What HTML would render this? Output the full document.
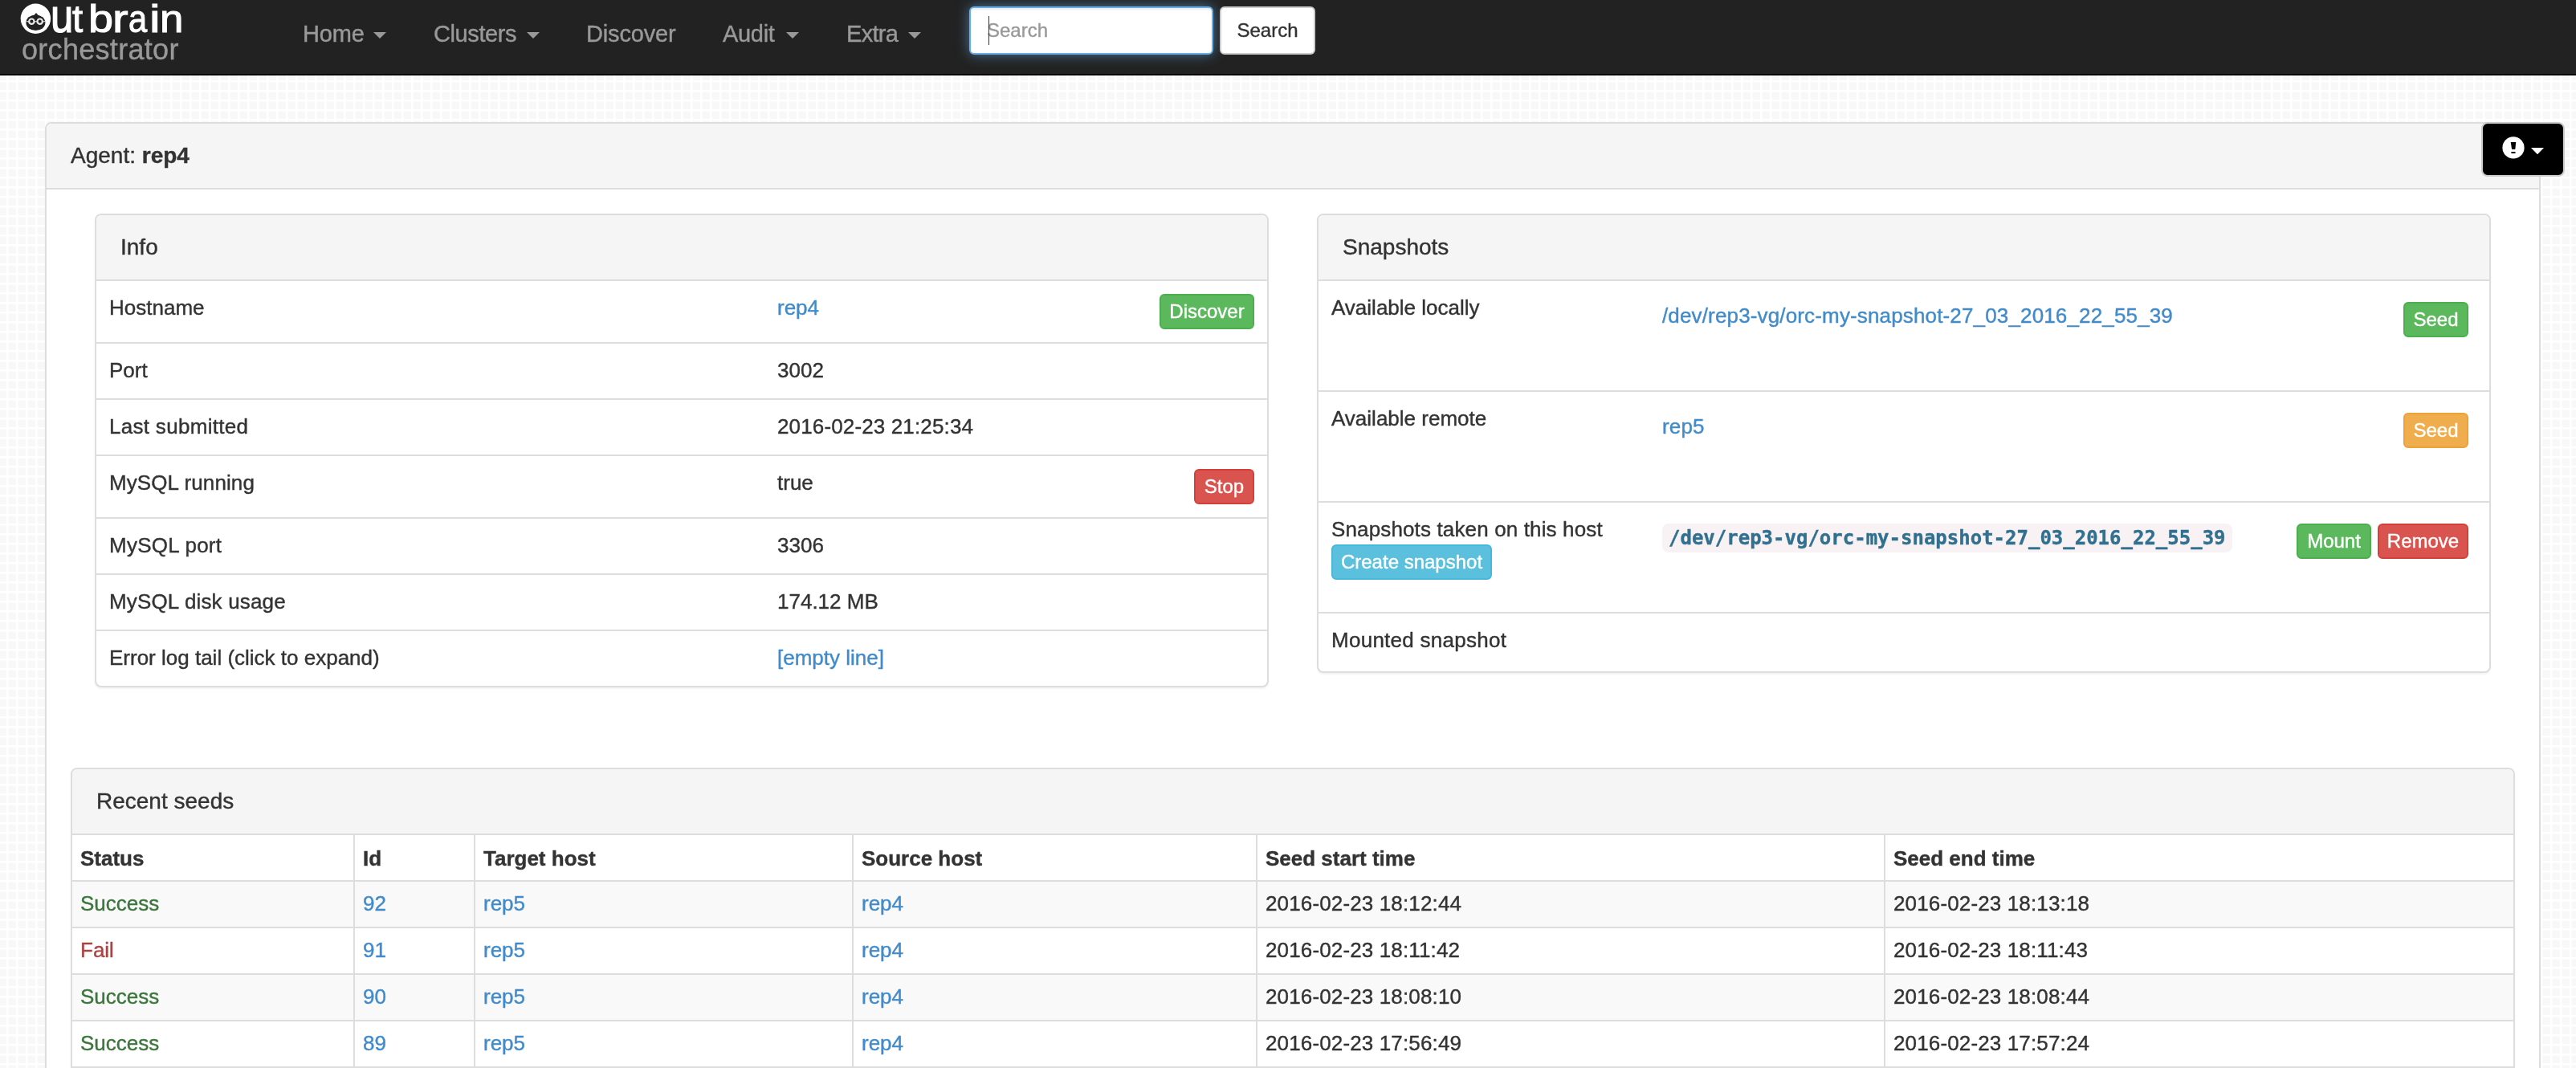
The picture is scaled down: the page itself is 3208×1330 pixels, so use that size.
<!DOCTYPE html>
<html lang="en">
<head>
<meta charset="utf-8">
<title>Orchestrator - Agent rep4</title>
<style>
*{box-sizing:border-box;}
html,body{margin:0;padding:0;}
body{
  width:3208px;height:1330px;overflow:hidden;position:relative;
  font-family:"Liberation Sans",Arial,Helvetica,sans-serif;
  font-size:26px;line-height:36px;color:#333;-webkit-text-stroke:0.4px;
  background-color:#f8f8f8;
  background-image:
    linear-gradient(to right,#fff 0,#fff 2px,rgba(255,255,255,.4) 2px,rgba(255,255,255,.4) 3px,transparent 3px),
    linear-gradient(to bottom,#fff 0,#fff 2px,rgba(255,255,255,.4) 2px,rgba(255,255,255,.4) 3px,transparent 3px);
  background-size:12px 12px,12px 12px;
  background-position:8px 4px,8px 4px;
}
a{color:#428bca;text-decoration:none;}
table{border-collapse:collapse;border-spacing:0;}

/* NAVBAR */
#nav{position:absolute;left:0;top:0;width:3208px;height:94px;background:#222;border-bottom:2px solid #080808;}
#brand{position:absolute;left:0;top:0;width:330px;height:92px;}
#brand .ob{position:absolute;left:0;top:0;}
#brand .obt{position:absolute;left:0;top:-1.5px;font-size:49px;line-height:49px;color:#fff;-webkit-text-stroke:1px #fff;}
#brand .obt span{position:absolute;top:0;display:block;transform-origin:0 41.5px;}
#brand .orc{position:absolute;left:27px;top:44px;font-size:36px;line-height:36px;color:#999;letter-spacing:0.3px;white-space:nowrap;}
.nv{position:absolute;top:22px;font-size:29px;line-height:40px;color:#999;white-space:nowrap;}
.caret{display:inline-block;width:0;height:0;margin-left:11px;vertical-align:middle;border-top:8px solid #999;border-left:8px solid transparent;border-right:8px solid transparent;position:relative;top:0px;}
#q{position:absolute;left:1207px;top:8px;width:304px;height:60px;background:#fff;border:2px solid #66afe9;border-radius:6px;
   box-shadow:inset 0 2px 2px rgba(0,0,0,.075),0 0 16px rgba(102,175,233,.6);font-size:24px;line-height:36px;color:#999;padding:10px 20px 6px 20px;}
#q i{position:absolute;left:22px;top:10px;width:1px;height:36px;background:#333;}
#qb{position:absolute;left:1519px;top:8px;width:119px;height:60px;background:#fff;border:2px solid #ccc;border-radius:6px;font-size:24px;line-height:36px;color:#333;text-align:center;padding-top:10px;}

#abtn{position:absolute;left:3090px;top:152px;width:104px;height:68px;background:#000;border:2px solid #ccc;border-radius:8px;}
#abtn svg{display:block;}
#nav,.panel,#abtn{will-change:transform;}
/* PANELS */
.panel{position:absolute;background:#fff;border:2px solid #ddd;border-radius:8px;box-shadow:0 2px 2px rgba(0,0,0,.05);}
.ph{height:82px;background:#f5f5f5;border-bottom:2px solid #ddd;border-radius:6px 6px 0 0;padding:20px 30px;font-size:28px;line-height:40px;color:#333;white-space:nowrap;}
#outer{left:56px;top:152px;width:3108px;height:1400px;}
#info{left:118px;top:266px;width:1462px;height:590px;}
#snap{left:1640px;top:266px;width:1462px;height:572px;}
#seeds{left:88px;top:956px;width:3044px;height:500px;}

.t{width:100%;table-layout:fixed;}
.t td,.t th{padding:15px 16px 17px;vertical-align:top;border-top:2px solid #ddd;text-align:left;white-space:nowrap;}
.t tr:first-child td{border-top:0;}
.btn{display:inline-block;height:44px;padding:2px 0;text-align:center;font-size:24px;line-height:36px;color:#fff;border:2px solid transparent;border-radius:6px;white-space:nowrap;vertical-align:top;position:relative;top:1px;}
.bs{background:#5cb85c;border-color:#4cae4c;}
.bd{background:#d9534f;border-color:#d43f3a;}
.bw{background:#f0ad4e;border-color:#eea236;}
.bi{background:#5bc0de;border-color:#46b8da;}
.r{text-align:right !important;}

/* info */
#info .c1{width:832px;}
#info .c3{width:170px;}
/* snapshots */
#snap .c1{width:402px;}
.in{width:100%;table-layout:fixed;margin-bottom:40px;}
.in td{padding:11px 10px 9px;vertical-align:top;white-space:nowrap;border:0;}
code{display:inline-block;height:36px;font-family:"DejaVu Sans Mono","Liberation Mono",monospace;font-weight:bold;font-size:24px;line-height:36px;color:#31708f;background:#f9f2f4;border-radius:8px;padding:0 8px;vertical-align:top;position:relative;top:1px;}

.in .btn,.in code{top:0;}
.in a{letter-spacing:0.15px;position:relative;top:-1px;}
.d{letter-spacing:0.14px;}
/* seeds */
#seeds .t td,#seeds .t th{padding:9px 10px 11px;border:2px solid #ddd;}
#seeds .t th{padding:11px 10px 9px;}
#seeds .t tr td:first-child,#seeds .t tr th:first-child{border-left:0;}
#seeds .t tr td:last-child,#seeds .t tr th:last-child{border-right:0;}
#seeds .t tr:first-child th{border-top:0;}
#seeds .t tr.s td{background:#f9f9f9;}
.ok{color:#3c763d;}
.no{color:#a94442;}
</style>
</head>
<body>

<div id="nav">
  <div id="brand">
    <svg class="ob" width="330" height="92" viewBox="0 0 330 92">
      <circle cx="44.4" cy="23.2" r="18.7" fill="#fff"/>
      <ellipse cx="44.4" cy="28.3" rx="12" ry="9.8" fill="#222"/>
      <path d="M41 20.4 L45 16 L49 20.4 Z" fill="#222"/>
      <path d="M32.6 26.7 H56.2" stroke="#ccc" stroke-width="1.2" fill="none"/>
      <circle cx="39.4" cy="26.7" r="3.2" fill="#222" stroke="#eaeaea" stroke-width="2.2"/>
      <circle cx="49.7" cy="26.7" r="3.2" fill="#222" stroke="#eaeaea" stroke-width="2.2"/>
    </svg>
    <div class="obt"><span style="left:62.8px;transform:scale(1.04,1.19)">u</span><span style="left:89.7px;transform:scale(0.97,1)">t</span><span style="left:110.3px;transform:scale(1.14,1)">b</span><span style="left:140.4px;transform:scale(1.2,1)">r</span><span style="left:160.1px;transform:scale(0.85,1)">a</span><span style="left:186.3px;transform:scale(1.25,1)">i</span><span style="left:199.1px;transform:scale(1.08,1)">n</span></div>
    <div class="orc">orchestrator</div>
  </div>
  <div class="nv" style="left:377px;letter-spacing:-0.2px">Home<span class="caret"></span></div>
  <div class="nv" style="left:540px;letter-spacing:-0.4px">Clusters<span class="caret" style="margin-left:13px"></span></div>
  <div class="nv" style="left:730px;letter-spacing:-0.15px">Discover</div>
  <div class="nv" style="left:900px;letter-spacing:-0.3px">Audit<span class="caret" style="margin-left:14px"></span></div>
  <div class="nv" style="left:1054px;letter-spacing:-0.7px">Extra<span class="caret" style="margin-left:13px"></span></div>
  <div id="q">Search<i></i></div>
  <div id="qb">Search</div>
</div>

<div class="panel" id="outer">
  <div class="ph">Agent: <b>rep4</b></div>
</div>

<div class="panel" id="info">
  <div class="ph">Info</div>
  <table class="t">
    <tr><td class="c1">Hostname</td><td><a>rep4</a></td><td class="c3 r"><span class="btn bs" style="width:118px">Discover</span></td></tr>
    <tr><td>Port</td><td>3002</td><td></td></tr>
    <tr><td style="letter-spacing:.3px">Last submitted</td><td class="d">2016-02-23 21:25:34</td><td></td></tr>
    <tr><td style="letter-spacing:.1px">MySQL running</td><td>true</td><td class="r"><span class="btn bd" style="width:75px">Stop</span></td></tr>
    <tr><td style="letter-spacing:.25px">MySQL port</td><td>3306</td><td></td></tr>
    <tr><td style="letter-spacing:.16px">MySQL disk usage</td><td>174.12 MB</td><td></td></tr>
    <tr><td>Error log tail (click to expand)</td><td><a>[empty line]</a></td><td></td></tr>
  </table>
</div>

<div class="panel" id="snap">
  <div class="ph">Snapshots</div>
  <table class="t">
    <tr><td class="c1">Available locally</td><td>
      <table class="in"><tr><td><a>/dev/rep3-vg/orc-my-snapshot-27_03_2016_22_55_39</a></td><td class="r" style="width:240px"><span class="btn bs" style="width:81px">Seed</span></td></tr></table>
    </td></tr>
    <tr><td>Available remote</td><td>
      <table class="in"><tr><td><a>rep5</a></td><td class="r" style="width:240px"><span class="btn bw" style="width:81px">Seed</span></td></tr></table>
    </td></tr>
    <tr><td><span style="letter-spacing:.14px">Snapshots taken on this host</span><br><span class="btn bi" style="width:200px">Create snapshot</span></td><td>
      <table class="in"><tr><td><code>/dev/rep3-vg/orc-my-snapshot-27_03_2016_22_55_39</code></td><td class="r" style="width:240px"><span class="btn bs" style="width:93px">Mount</span><span class="btn bd" style="width:113px;margin-left:8px">Remove</span></td></tr></table>
    </td></tr>
    <tr><td style="height:72px;letter-spacing:.27px">Mounted snapshot</td><td></td></tr>
  </table>
</div>

<div class="panel" id="seeds">
  <div class="ph">Recent seeds</div>
  <table class="t">
    <colgroup><col style="width:351px"><col style="width:150px"><col style="width:471px"><col style="width:503px"><col style="width:782px"><col></colgroup>
    <tr><th>Status</th><th>Id</th><th>Target host</th><th>Source host</th><th>Seed start time</th><th>Seed end time</th></tr>
    <tr class="s"><td class="ok">Success</td><td><a>92</a></td><td><a>rep5</a></td><td><a>rep4</a></td><td class="d">2016-02-23 18:12:44</td><td class="d">2016-02-23 18:13:18</td></tr>
    <tr><td class="no">Fail</td><td><a>91</a></td><td><a>rep5</a></td><td><a>rep4</a></td><td class="d">2016-02-23 18:11:42</td><td class="d">2016-02-23 18:11:43</td></tr>
    <tr class="s"><td class="ok">Success</td><td><a>90</a></td><td><a>rep5</a></td><td><a>rep4</a></td><td class="d">2016-02-23 18:08:10</td><td class="d">2016-02-23 18:08:44</td></tr>
    <tr><td class="ok">Success</td><td><a>89</a></td><td><a>rep5</a></td><td><a>rep4</a></td><td class="d">2016-02-23 17:56:49</td><td class="d">2016-02-23 17:57:24</td></tr>
    <tr class="s"><td class="ok">Success</td><td><a>88</a></td><td><a>rep5</a></td><td><a>rep4</a></td><td class="d">2016-02-23 17:50:12</td><td class="d">2016-02-23 17:50:47</td></tr>
  </table>
</div>

<div id="abtn">
  <svg width="100" height="64" viewBox="0 0 100 64">
    <circle cx="38" cy="29.9" r="13.6" fill="#fff"/>
    <path d="M34.7 23.1 H41.2 L40.3 32 H36.1 Z" fill="#000"/>
    <rect x="35.4" y="35" width="5.1" height="2" fill="#000"/>
    <path d="M60 29.9 H76 L68 38.2 Z" fill="#fff"/>
  </svg>
</div>

</body>
</html>
